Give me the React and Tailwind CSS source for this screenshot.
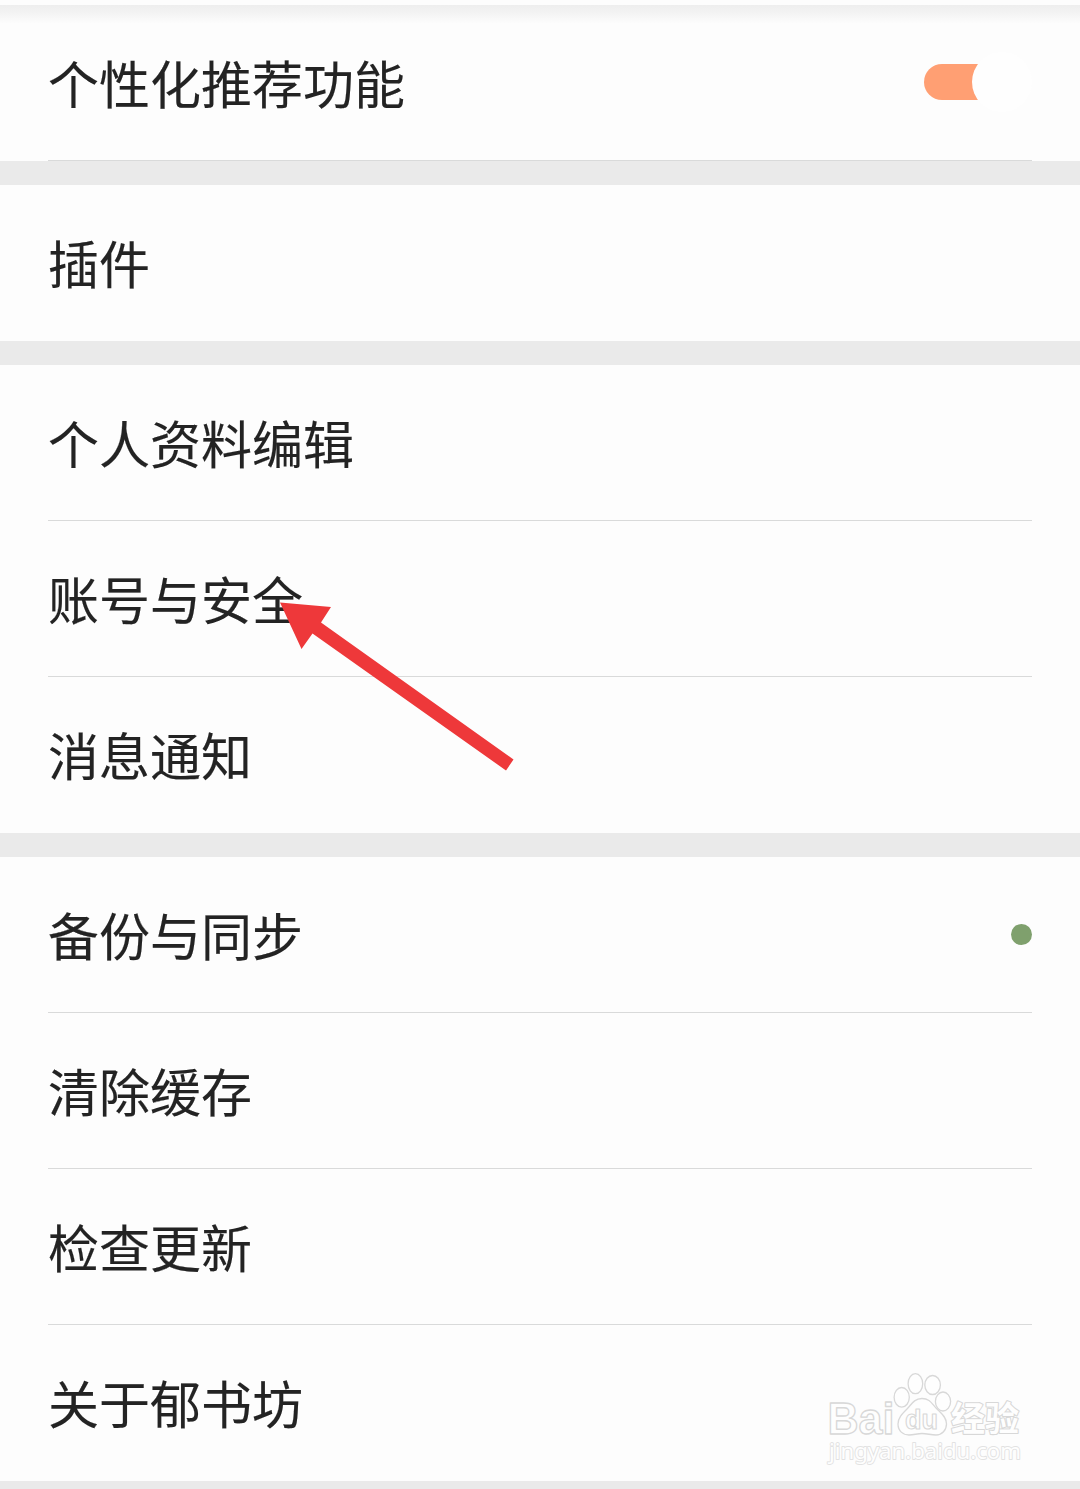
import React from 'react';

const groups = [
  [{ label: '个性化推荐功能', toggle: true, divider: true }],
  [{ label: '插件' }],
  [
    { label: '个人资料编辑', divider: true },
    { label: '账号与安全', divider: true },
    { label: '消息通知' },
  ],
  [
    { label: '备份与同步', dot: true, divider: true },
    { label: '清除缓存', divider: true },
    { label: '检查更新', divider: true },
    { label: '关于郁书坊' },
  ],
];

const Toggle = () => (
  <div className="relative h-9 w-[72px] rounded-full bg-[#ff9f73]">
    <div className="absolute -top-3 left-12 size-[60px] rounded-full bg-[#fefefe]" />
  </div>
);

const Row = ({ label, toggle, dot, divider }) => (
  <div className="h-[156px] px-12">
    <div
      className={`flex h-full items-center justify-between border-b ${
        divider ? 'border-[#d9dada]' : 'border-transparent'
      }`}
    >
      <span className="mb-0.5 text-[51px] leading-[74px] whitespace-nowrap [-webkit-text-stroke:0.15px_#232323]">
        {label}
      </span>
      {toggle && (
        <div className="mr-9 mb-0.5">
          <Toggle />
        </div>
      )}
      {dot && <span className="size-[21px] rounded-full bg-[#7fa06d]" />}
    </div>
  </div>
);

const Arrow = () => (
  <svg
    className="absolute top-[600px] left-[279px]"
    width="236"
    height="172"
    viewBox="279 600 236 172"
    fill="#ee383a"
  >
    <path d="M280 602.5L331 607L321 622.5L513.5 759.5L506 770.5L312.5 633.5L301.5 649Z" />
  </svg>
);

const Watermark = () => (
  <svg
    className="absolute top-[1368px] left-[822px]"
    width="208"
    height="104"
    viewBox="822 1368 208 104"
    fill="#fefefe"
    stroke="#d8d8d8"
    strokeWidth="1.3"
    strokeLinejoin="round"
  >
    <text
      x="827.5"
      y="1434"
      fontSize="44"
      fontWeight="700"
      fontFamily="'Liberation Sans', Arial, sans-serif"
      textLength="67"
      lengthAdjust="spacingAndGlyphs"
    >
      Bai
    </text>
    <ellipse cx="901.7" cy="1397.3" rx="7.6" ry="9.8" />
    <ellipse cx="915.4" cy="1383.7" rx="7.3" ry="10" />
    <ellipse cx="932.6" cy="1385" rx="7.8" ry="9.5" />
    <ellipse cx="943" cy="1401.5" rx="7.6" ry="9.5" />
    <path d="M922 1398.5C914 1398.5 911 1405 907 1409C902 1414 898 1418 898 1424C898 1431 903 1435 909 1435C914 1435 917 1433.5 922 1433.5C927 1433.5 931 1435 936 1435C942 1435 946.5 1430 946.5 1424C946.5 1417 941 1413 937 1409C932 1404 930 1398.5 922 1398.5Z" />
    <text
      x="905"
      y="1429"
      fontSize="27"
      fontWeight="700"
      fontFamily="'Liberation Sans', Arial, sans-serif"
      textLength="33"
      lengthAdjust="spacingAndGlyphs"
      strokeWidth="1.1"
    >
      du
    </text>
    <text
      x="951"
      y="1431"
      fontSize="34"
      fontWeight="700"
      fontFamily="'Noto Sans CJK SC', sans-serif"
      textLength="68"
      strokeWidth="2.2"
      paintOrder="stroke"
    >
      经验
    </text>
    <text
      x="829"
      y="1459"
      fontSize="22"
      fontFamily="'Noto Sans', sans-serif"
      textLength="192"
      lengthAdjust="spacingAndGlyphs"
      stroke="#e2e2e2"
      strokeWidth="1.8"
      paintOrder="stroke"
    >
      jingyan.baidu.com
    </text>
  </svg>
);

const App = () => (
  <div className="relative h-[1489px] w-[1080px] overflow-hidden bg-[#eaeaea] font-['Noto_Sans_CJK_SC',sans-serif] text-[#232323]">
    <div className="h-[5px] bg-[#fdfdfd]" />
    <div className="flex flex-col gap-6">
      {groups.map((rows, i) => (
        <section
          key={i}
          className={
            i === 0
              ? 'bg-linear-to-b from-[#eeeeee] from-0% via-[#f3f3f3] via-5% to-[#fdfdfd] to-12%'
              : 'bg-[#fdfdfd]'
          }
        >
          {rows.map((row) => (
            <Row key={row.label} {...row} />
          ))}
        </section>
      ))}
    </div>
    <Arrow />
    <Watermark />
  </div>
);

export default App;
